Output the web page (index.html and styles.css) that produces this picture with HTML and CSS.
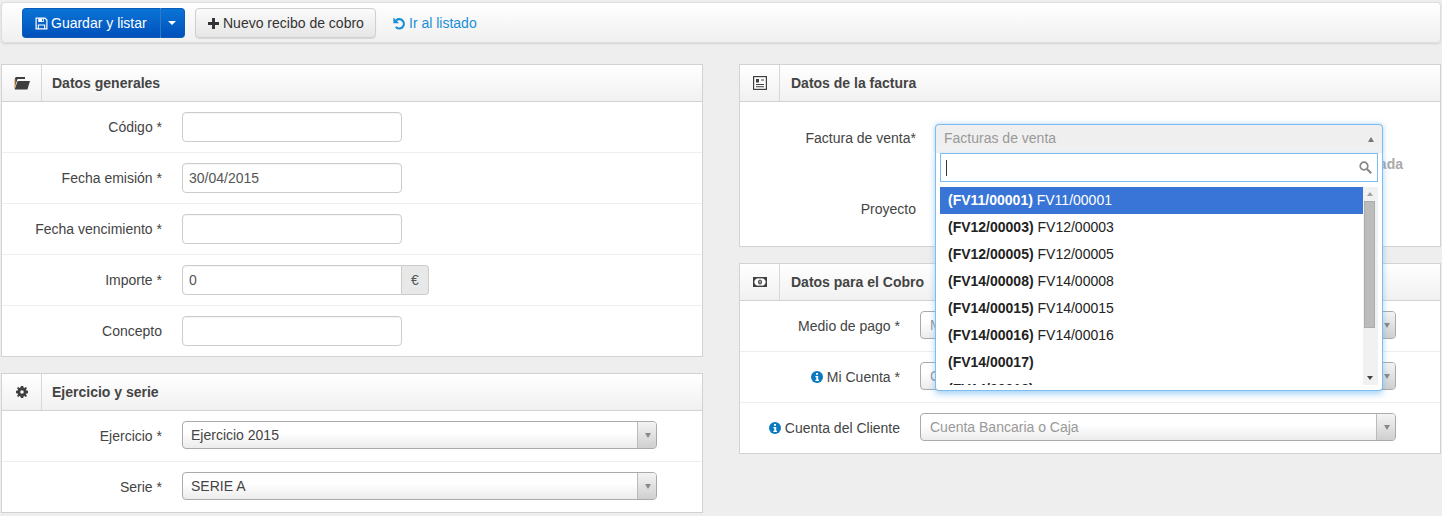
FILE: index.html
```html
<!DOCTYPE html>
<html lang="es">
<head>
<meta charset="utf-8">
<title>Nuevo recibo de cobro</title>
<link rel="stylesheet" href="styles.css">
</head>
<body>
<div class="toolbar">
  <div class="btn-group">
    <button class="btn btn-primary btn-main"><svg class="ico" viewBox="0 0 14 14"><path fill="none" stroke="currentColor" stroke-width="1.3" d="M1.2 1.2h9.6l2 2v9.6H1.2z"/><path fill="currentColor" d="M3.5 1.5h6v4h-6zM3 8h8v5H3z"/><path fill="#0a5fc4" d="M7.5 2.3h1.2v2.4H7.5zM4.2 9.2h5.6v3H4.2z"/></svg>Guardar y listar</button>
    <button class="btn btn-primary btn-caret" aria-label="Más"><span class="caret"></span></button>
  </div>
  <button class="btn btn-default"><svg class="ico plus" viewBox="0 0 12 12"><path fill="currentColor" d="M4.4 0h3.2v4.4H12v3.2H7.6V12H4.4V7.6H0V4.4h4.4z"/></svg>Nuevo recibo de cobro</button>
  <a class="link" href="#"><svg class="ico undo" viewBox="0 0 14 14"><path fill="none" stroke="currentColor" stroke-width="2.4" d="M3.4 3.6A5 5 0 1 1 3 10.8"/><path fill="currentColor" d="M.4.6v6.2h6.2z"/></svg>Ir al listado</a>
</div>

<div class="columns">
  <div class="column">
    <section class="panel">
      <header class="panel-head">
        <span class="panel-icon"><svg width="16" height="13" viewBox="0 0 16 13"><path fill="#3f3f3f" d="M2 0h9v2H3.5L1.5 8H1V1z"/><path fill="#3f3f3f" d="M3.6 4H16l-2.6 8.4H.6z"/><path fill="#d08a3c" d="M.5 2h1v8l-1 2z"/></svg></span>
        <h2>Datos generales</h2>
      </header>
      <div class="row"><label>Código *</label><input class="input" type="text"></div>
      <div class="row"><label>Fecha emisión *</label><input class="input" type="text" value="30/04/2015"></div>
      <div class="row"><label>Fecha vencimiento *</label><input class="input" type="text"></div>
      <div class="row"><label>Importe *</label><div class="input-group"><input class="input joined" type="text" value="0"><span class="addon">€</span></div></div>
      <div class="row"><label>Concepto</label><input class="input" type="text"></div>
    </section>

    <section class="panel">
      <header class="panel-head">
        <span class="panel-icon"><svg width="12" height="12" viewBox="0 0 12 12"><path fill="#3f3f3f" fill-rule="evenodd" d="M4.8 0h2.4l.3 1.6 1 .4L9.9 1l1.1 1.1-1 1.4.4 1L12 4.8v2.4l-1.6.3-.4 1 1 1.4-1.1 1.1-1.4-1-1 .4-.3 1.6H4.8l-.3-1.6-1-.4-1.4 1L1 9.9l1-1.4-.4-1L0 7.2V4.8l1.6-.3.4-1-1-1.4L2.1 1l1.4 1 1-.4zM6 4.2a1.8 1.8 0 1 0 0 3.6 1.8 1.8 0 0 0 0-3.6z"/></svg></span>
        <h2>Ejercicio y serie</h2>
      </header>
      <div class="row"><label>Ejercicio *</label><div class="select sel-left"><span>Ejercicio 2015</span><b class="arrow"></b></div></div>
      <div class="row"><label>Serie *</label><div class="select sel-left"><span>SERIE A</span><b class="arrow"></b></div></div>
    </section>
  </div>

  <div class="column column-right">
    <section class="panel">
      <header class="panel-head">
        <span class="panel-icon"><svg width="14" height="14" viewBox="0 0 14 14"><rect x=".6" y=".6" width="12.8" height="12.8" fill="#fff" stroke="#3f3f3f" stroke-width="1.2"/><path fill="#3f3f3f" d="M3 3h3v3.5H3zM8 3.5h3v1H8zM3 8h8v1H3zM3 10.3h8v1H3z"/></svg></span>
        <h2>Datos de la factura</h2>
      </header>
      <div class="factura-body">
        <div class="factura-row">
          <label>Factura de venta*</label>
          <div class="chosen">
            <div class="chosen-single"><span>Facturas de venta</span><b class="arrow-up"></b></div>
            <div class="hint">Facturada</div>
            <div class="drop">
              <div class="search"><span class="cursor"></span><svg width="13" height="13" viewBox="0 0 13 13"><circle cx="5" cy="5" r="3.8" fill="none" stroke="#888" stroke-width="1.7"/><path stroke="#888" stroke-width="2.2" d="M8 8l4.2 4.2"/></svg></div>
              <div class="results">
                <ul class="options">
                  <li class="active"><strong>(FV11/00001)</strong> FV11/00001</li>
                  <li><strong>(FV12/00003)</strong> FV12/00003</li>
                  <li><strong>(FV12/00005)</strong> FV12/00005</li>
                  <li><strong>(FV14/00008)</strong> FV14/00008</li>
                  <li><strong>(FV14/00015)</strong> FV14/00015</li>
                  <li><strong>(FV14/00016)</strong> FV14/00016</li>
                  <li><strong>(FV14/00017)</strong></li>
                  <li><strong>(FV14/00018)</strong></li>
                </ul>
                <div class="scrollbar">
                  <span class="sb-up"></span>
                  <span class="sb-thumb"></span>
                  <span class="sb-down"></span>
                </div>
              </div>
            </div>
          </div>
        </div>
        <div class="factura-row proyecto"><label>Proyecto</label></div>
      </div>
    </section>

    <section class="panel">
      <header class="panel-head">
        <span class="panel-icon"><svg width="14" height="10" viewBox="0 0 14 10"><rect x=".7" y=".7" width="12.6" height="8.6" fill="#fff" stroke="#3f3f3f" stroke-width="1.4"/><path fill="#3f3f3f" d="M1 1h3L1 4zM13 1h-3l3 3zM1 9h3L1 6zM13 9h-3l3-3z"/><ellipse cx="7" cy="5" rx="2" ry="2.6" fill="#3f3f3f"/><rect x="6.6" y="3.6" width=".9" height="2.8" fill="#fff"/></svg></span>
        <h2>Datos para el Cobro</h2>
      </header>
      <div class="row"><label>Medio de pago *</label><div class="select sel-right"><span class="ph">Medio de pago</span><b class="arrow"></b></div></div>
      <div class="row"><label><svg class="info" viewBox="0 0 12 12"><circle cx="6" cy="6" r="6" fill="#0a7ac0"/><path fill="#fff" d="M5 2h2v1.8H5zM4.4 5h2.8v3.8H8V10H4.4V8.8h.9V6.2h-.9z"/></svg>Mi Cuenta *</label><div class="select sel-right"><span class="ph">Cuenta Bancaria o Caja</span><b class="arrow"></b></div></div>
      <div class="row"><label><svg class="info" viewBox="0 0 12 12"><circle cx="6" cy="6" r="6" fill="#0a7ac0"/><path fill="#fff" d="M5 2h2v1.8H5zM4.4 5h2.8v3.8H8V10H4.4V8.8h.9V6.2h-.9z"/></svg>Cuenta del Cliente</label><div class="select sel-right"><span class="ph">Cuenta Bancaria o Caja</span><b class="arrow"></b></div></div>
    </section>
  </div>
</div>
</body>
</html>
```
FILE: styles.css
```css
* { box-sizing: border-box; }
html, body { margin: 0; padding: 0; }
body {
  background: #eeeeee;
  font-family: "Liberation Sans", Arial, sans-serif;
  font-size: 14px;
  color: #444;
  height: 516px;
  overflow: hidden;
  padding: 2px 1px 0;
}
.toolbar {
  display: flex;
  align-items: center;
  height: 41px;
  padding: 1px 0 0 20px;
  margin-bottom: 21px;
  background: linear-gradient(#ffffff, #f0f0f0);
  border: 1px solid #dedede;
  border-radius: 4px;
  box-shadow: 0 1px 2px rgba(0,0,0,.12);
}
.btn-group { display: flex; margin-right: 10px; }
.btn {
  height: 30px;
  font: 14px "Liberation Sans", Arial, sans-serif;
  padding: 0 12px;
  display: inline-flex;
  align-items: center;
  border-radius: 4px;
  cursor: pointer;
  white-space: nowrap;
}
.btn-primary {
  color: #fff;
  background: linear-gradient(#0a74d6, #0050bb);
  border: 1px solid #0a5cb5;
}
.btn-main { border-radius: 4px 0 0 4px; border-right: 1px solid #2f78c4; width: 139px; }
.btn-main .ico { margin-right: 3px; }
.btn-caret { border-radius: 0 4px 4px 0; border-left: 0; width: 24px; padding: 0 0 0 7px; }
.caret { width: 0; height: 0; border: 4px solid transparent; border-top-color: #fff; border-bottom: 0; border-width: 4px 4px 0; }
.btn-default {
  color: #333;
  width: 181px;
  padding: 0 0 0 12px;
  background: linear-gradient(#fbfbfb, #e6e6e6);
  border: 1px solid #cfcfcf;
  box-shadow: 0 1px 1px rgba(0,0,0,.1);
}
.ico { width: 13px; height: 13px; margin-right: 4px; flex: none; }
.plus { width: 11px; height: 11px; margin-right: 4px; }
.link {
  color: #1a8fd6;
  text-decoration: none;
  display: inline-flex;
  align-items: center;
  margin-left: 17px;
}
.undo { width: 13px; height: 13px; margin-right: 3px; }
.columns { display: flex; gap: 36px; align-items: flex-start; }
.column { width: 702px; display: flex; flex-direction: column; gap: 16px; }
.panel {
  background: #fff;
  border: 1px solid #d2d2d2;
}
.panel-head {
  display: flex;
  align-items: stretch;
  height: 37px;
  background: linear-gradient(#ffffff, #f1f1f1);
  border-bottom: 1px solid #d2d2d2;
}
.panel-icon {
  width: 40px;
  display: flex;
  align-items: center;
  justify-content: center;
  border-right: 1px solid #d8d8d8;
}
.panel-head h2 {
  margin: 0 0 0 10px;
  font-size: 14px;
  font-weight: bold;
  color: #444;
  line-height: 36px;
}
.column-right .panel-head h2 { margin-left: 11px; }
.row {
  display: flex;
  align-items: center;
  gap: 20px;
  height: 51px;
  padding: 10px 0;
  border-bottom: 1px solid #eeeeee;
}
.row:last-child { border-bottom: 0; height: 50px; }
.row label { width: 160px; text-align: right; color: #444; flex: none; }
.input {
  width: 220px;
  height: 30px;
  padding: 0 6px;
  border: 1px solid #cccccc;
  border-radius: 4px;
  font: 14px "Liberation Sans", Arial, sans-serif;
  color: #555;
  background: #fff;
  box-shadow: inset 0 1px 1px rgba(0,0,0,.04);
}
.input-group { display: flex; }
.joined { border-radius: 4px 0 0 4px; }
.addon {
  width: 27px;
  height: 30px;
  display: flex;
  align-items: center;
  justify-content: center;
  background: #e8e8e8;
  border: 1px solid #cccccc;
  border-left: 0;
  border-radius: 0 4px 4px 0;
  color: #555;
}
.select {
  position: relative;
  align-self: flex-start;
  height: 28px;
  border: 1px solid #aaaaaa;
  border-radius: 4px;
  background: linear-gradient(#ffffff 40%, #ececec);
  padding: 0 8px;
  line-height: 26px;
  color: #444;
}
.sel-left { width: 475px; }
.sel-right { width: 476px; padding-left: 9px; }
.ph { color: #999; }
.select::after {
  content: "";
  position: absolute;
  top: 0;
  bottom: 0;
  right: 0;
  width: 18px;
  border-left: 1px solid #bbb;
  border-radius: 0 3px 3px 0;
  background: linear-gradient(#f4f4f4, #cfcfcf);
}
.arrow {
  position: absolute;
  z-index: 1;
  right: 5px;
  top: 11px;
  width: 0;
  height: 0;
  border-style: solid;
  border-width: 5px 3.5px 0;
  border-color: #888 transparent transparent;
}
.factura-body { padding: 22px 0 22px; }
.factura-row { display: flex; align-items: flex-start; gap: 19px; }
.factura-row label { width: 176px; text-align: right; line-height: 28px; flex: none; color: #444; }
.chosen { position: relative; width: 448px; height: 50px; }
.chosen-single {
  position: relative;
  height: 30px;
  padding: 0 8px;
  line-height: 27px;
  color: #999;
  background: linear-gradient(#efefef 60%, #f4f4f4);
  border: 1px solid #7cbcf0;
  border-bottom: 0;
  border-radius: 4px 4px 0 0;
  box-shadow: 0 0 5px rgba(82,168,236,.5);
}
.arrow-up {
  position: absolute;
  right: 8px;
  top: 12px;
  width: 0;
  height: 0;
  border-style: solid;
  border-width: 0 3.5px 5px;
  border-color: transparent transparent #777;
}
.hint {
  position: absolute;
  top: 31px;
  left: 100%;
  margin-left: 20px;
  transform: translateX(-100%);
  font-weight: bold;
  color: #aaa;
  line-height: 18px;
  white-space: nowrap;
}
.drop {
  position: absolute;
  z-index: 10;
  top: 29px;
  left: 0;
  width: 448px;
  height: 238px;
  padding: 0 4px;
  background: #fff;
  border: 1px solid #7cbcf0;
  border-top: 0;
  border-radius: 0 0 4px 4px;
  box-shadow: 0 3px 6px rgba(82,168,236,.5);
}
.search {
  position: relative;
  height: 29px;
  border: 1px solid #7cbcf0;
  display: flex;
  align-items: center;
  justify-content: space-between;
  padding: 0 5px 0 5px;
  background: #fff;
}
.cursor { display: block; width: 1px; height: 16px; background: #333; }
.results { display: flex; height: 204px; margin-top: 5px; overflow: hidden; }
.options { list-style: none; margin: 0; padding: 0; width: 423px; flex: none; color: #222; overflow: hidden; height: 198px; }
.options li { height: 27px; line-height: 26px; padding-left: 8px; white-space: nowrap; }
.options li.active { background: #3875d7; color: #fff; }
.scrollbar {
  position: relative;
  width: 15px;
  height: 198px;
  background: #f1f1f1;
}
.sb-up, .sb-down { position: absolute; left: 4px; width: 0; height: 0; border-style: solid; }
.sb-up { top: 5px; border-width: 0 3.5px 4px; border-color: transparent transparent #a3a3a3; }
.sb-down { bottom: 5px; border-width: 4px 3.5px 0; border-color: #444 transparent transparent; }
.sb-thumb { position: absolute; left: 1px; top: 14px; width: 11px; height: 127px; background: #bcbcbc; border: 1px solid #adadad; }
.proyecto { padding-top: 21px; height: 50px; }
.info { width: 12px; height: 12px; margin-right: 4px; vertical-align: -1px; }
```
